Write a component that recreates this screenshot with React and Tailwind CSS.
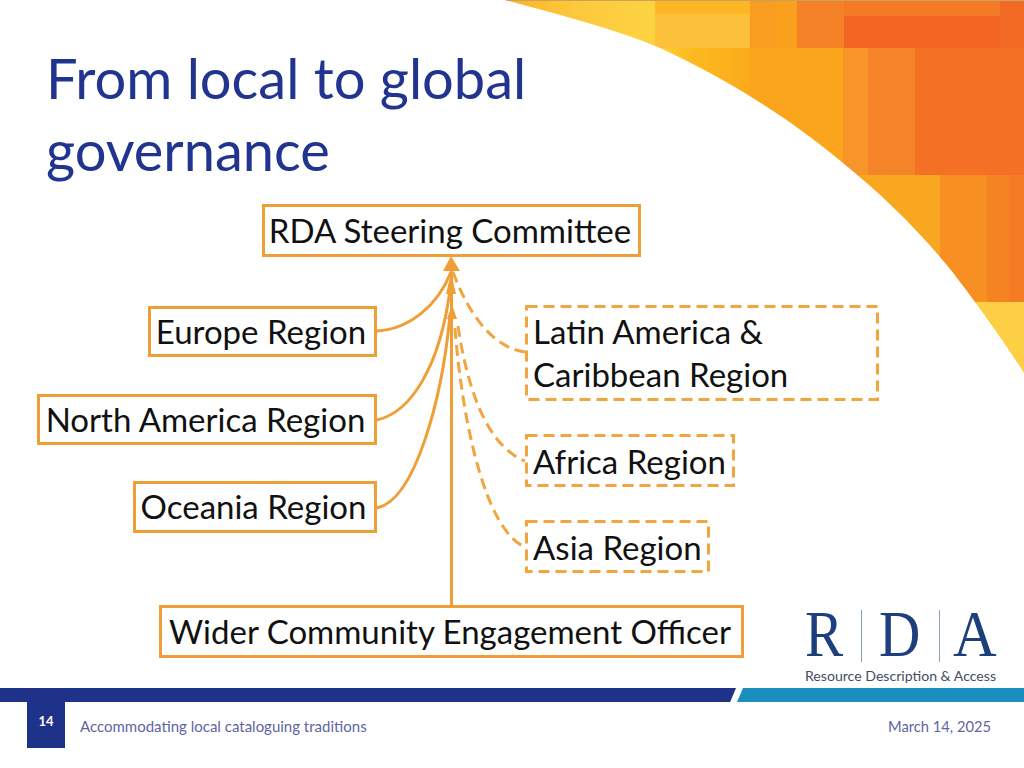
const ORANGE = "#f09f38";

const solidBoxes = [
  { label: "RDA Steering Committee", cls: "left-[262px] top-[204px] w-[379px] h-[53px]" },
  { label: "Europe Region", cls: "left-[148px] top-[306px] w-[229px] h-[51px]" },
  { label: "North America Region", cls: "left-[37px] top-[394px] w-[340px] h-[51px]" },
  { label: "Oceania Region", cls: "left-[133px] top-[481px] w-[244px] h-[52px]" },
  { label: "Wider Community Engagement Officer", cls: "left-[159px] top-[605px] w-[585px] h-[53px]" },
];

const dashedLabels = [
  { label: "Latin America &", cls: "left-[533px] top-[310px]" },
  { label: "Caribbean Region", cls: "left-[533px] top-[353px]" },
  { label: "Africa Region", cls: "left-[533px] top-[440px]" },
  { label: "Asia Region", cls: "left-[533px] top-[526px]" },
];

function Art() {
  return (
    <svg className="absolute right-0 top-0" width="520" height="380" viewBox="504 0 520 380">
      <defs>
        <clipPath id="arc">
          <path d="M505 0 C 560 15 612 28 660 48 C 725 78 790 118 843 163 C 880 193 912 224 940 257 C 957 276 1000 335 1024 373 L1024 0 Z" />
        </clipPath>
        <linearGradient id="y1" x1="0" x2="1" y1="0" y2="0">
          <stop offset="0" stopColor="#fbb124" />
          <stop offset="0.5" stopColor="#fdc93c" />
          <stop offset="1" stopColor="#fdd342" />
        </linearGradient>
        <linearGradient id="y2" x1="0" x2="1" y1="0" y2="0">
          <stop offset="0" stopColor="#fdd640" />
          <stop offset="0.4" stopColor="#fdbb20" />
          <stop offset="1" stopColor="#fbaa1a" />
        </linearGradient>
      </defs>
      <g clipPath="url(#arc)">
        <rect x="500" y="0" width="155" height="48" fill="url(#y1)" />
        <rect x="655" y="0" width="95" height="14" fill="#fdb624" />
        <rect x="655" y="14" width="95" height="34" fill="#fdc03a" />
        <rect x="750" y="0" width="25" height="48" fill="#f89d20" />
        <rect x="775" y="0" width="22" height="48" fill="#f9a11c" />
        <rect x="797" y="0" width="47" height="48" fill="#f58226" />
        <rect x="844" y="0" width="180" height="16" fill="#f47a26" />
        <rect x="844" y="16" width="180" height="32" fill="#f26522" />
        <rect x="1000" y="0" width="24" height="48" fill="#f36a24" />
        <rect x="650" y="48" width="100" height="127" fill="url(#y2)" />
        <rect x="750" y="48" width="93" height="127" fill="#fba51c" />
        <rect x="843" y="48" width="25" height="127" fill="#f7942a" />
        <rect x="868" y="48" width="47" height="127" fill="#f58328" />
        <rect x="915" y="48" width="109" height="127" fill="#f37024" />
        <rect x="843" y="175" width="97" height="127" fill="#f9a620" />
        <rect x="940" y="175" width="47" height="127" fill="#f78f22" />
        <rect x="987" y="175" width="22" height="127" fill="#f58322" />
        <rect x="1009" y="175" width="15" height="127" fill="#f47c24" />
        <rect x="960" y="302" width="64" height="80" fill="#fdcf45" />
        <rect x="500" y="0" width="524" height="1" fill="#c9a25e" />
      </g>
    </svg>
  );
}

function Connectors() {
  return (
    <svg className="absolute left-0 top-0" width="1024" height="680" viewBox="0 0 1024 680" fill="none">
      <g stroke={ORANGE} strokeWidth="3">
        <path d="M451.5 605 V262" />
        <path d="M377 331 C 410 329 438 305 451 272" />
        <path d="M377 420 C 412 412 440 365 450 290" />
        <path d="M377 508 C 415 500 442 400 450 315" />
      </g>
      <g stroke="#f0a540" strokeWidth="3" strokeDasharray="11 6">
        <path d="M453 272 C 470 318 495 348 525 352" />
        <path d="M458 326 C 466 380 484 445 525 461" />
        <path d="M455 328 C 462 420 485 530 525 547" />
        <rect x="526.5" y="306.5" width="351" height="93" />
        <rect x="526.5" y="435.5" width="207" height="50" />
        <rect x="526.5" y="521.5" width="182" height="50" />
      </g>
      <g fill={ORANGE}>
        <path d="M451 256 L460 271 L443 271 Z" />
        <path d="M451 273 L456 294 L446 294 Z" />
        <path d="M452 304 L457 319 L447 319 Z" />
      </g>
    </svg>
  );
}

function Logo() {
  return (
    <div className="absolute left-[804px] top-[610px] w-[194px] text-[#1d3f7e]">
      <div className="flex h-[52px] items-end font-['Liberation_Serif',serif] text-[65px] leading-[56px]">
        <span className="ml-[1px] w-[39px] origin-left scale-x-[0.88]">R</span>
        <span className="ml-[17px] h-[52px] w-[1px] bg-[#8a9fbd]" />
        <span className="ml-[17px] w-[41px] origin-left scale-x-[0.88]">D</span>
        <span className="ml-[19px] h-[52px] w-[1px] bg-[#8a9fbd]" />
        <span className="ml-[13px] w-[44px] origin-left scale-x-[0.93]">A</span>
      </div>
      <div className="ml-[1px] mt-[6px] whitespace-nowrap font-['Lato',sans-serif] text-[14.1px] leading-[16px] text-[#3f4e63]">
        Resource Description &amp; Access
      </div>
    </div>
  );
}

export default function App() {
  return (
    <div className="relative flex h-[768px] w-[1024px] flex-col overflow-hidden bg-white font-['Lato',sans-serif]">
      <Art />
      <div className="relative h-[688px]">
        <h1 className="pl-[46px] pt-[42px] text-[56px] font-normal leading-[72px] text-[#21348f]">
          From local to global
          <br />
          governance
        </h1>
        <Connectors />
        {solidBoxes.map((b) => (
          <div
            key={b.label}
            className={`absolute flex items-center justify-center whitespace-nowrap border-[3px] border-[#f09f38] bg-white pb-[2px] pr-[3px] text-[33px] leading-[40px] text-[#111111] ${b.cls}`}
          >
            {b.label}
          </div>
        ))}
        {dashedLabels.map((b) => (
          <div key={b.label} className={`absolute whitespace-nowrap text-[33px] leading-[43px] text-[#111111] ${b.cls}`}>
            {b.label}
          </div>
        ))}
        <Logo />
      </div>
      <div className="flex h-[14px] w-full">
        <div className="h-full w-[736px] bg-[#1f3289] [clip-path:polygon(0_0,100%_0,99.2%_100%,0_100%)]" />
        <div className="ml-[1px] h-full flex-1 bg-[#1b8dbf] [clip-path:polygon(6px_0,100%_0,100%_100%,0_100%)]" />
      </div>
      <div className="flex h-[46px] items-center pl-[27px] pr-[33px]">
        <div className="flex h-full w-[38px] items-center justify-center bg-[#1f3289] pb-[6px] text-[13px] font-bold text-white">
          14
        </div>
        <div className="ml-[15px] pt-[3px] text-[15px] text-[#5f64a4]">Accommodating local cataloguing traditions</div>
        <div className="ml-auto pt-[3px] text-[14.7px] text-[#5f64a4]">March 14, 2025</div>
      </div>
    </div>
  );
}
